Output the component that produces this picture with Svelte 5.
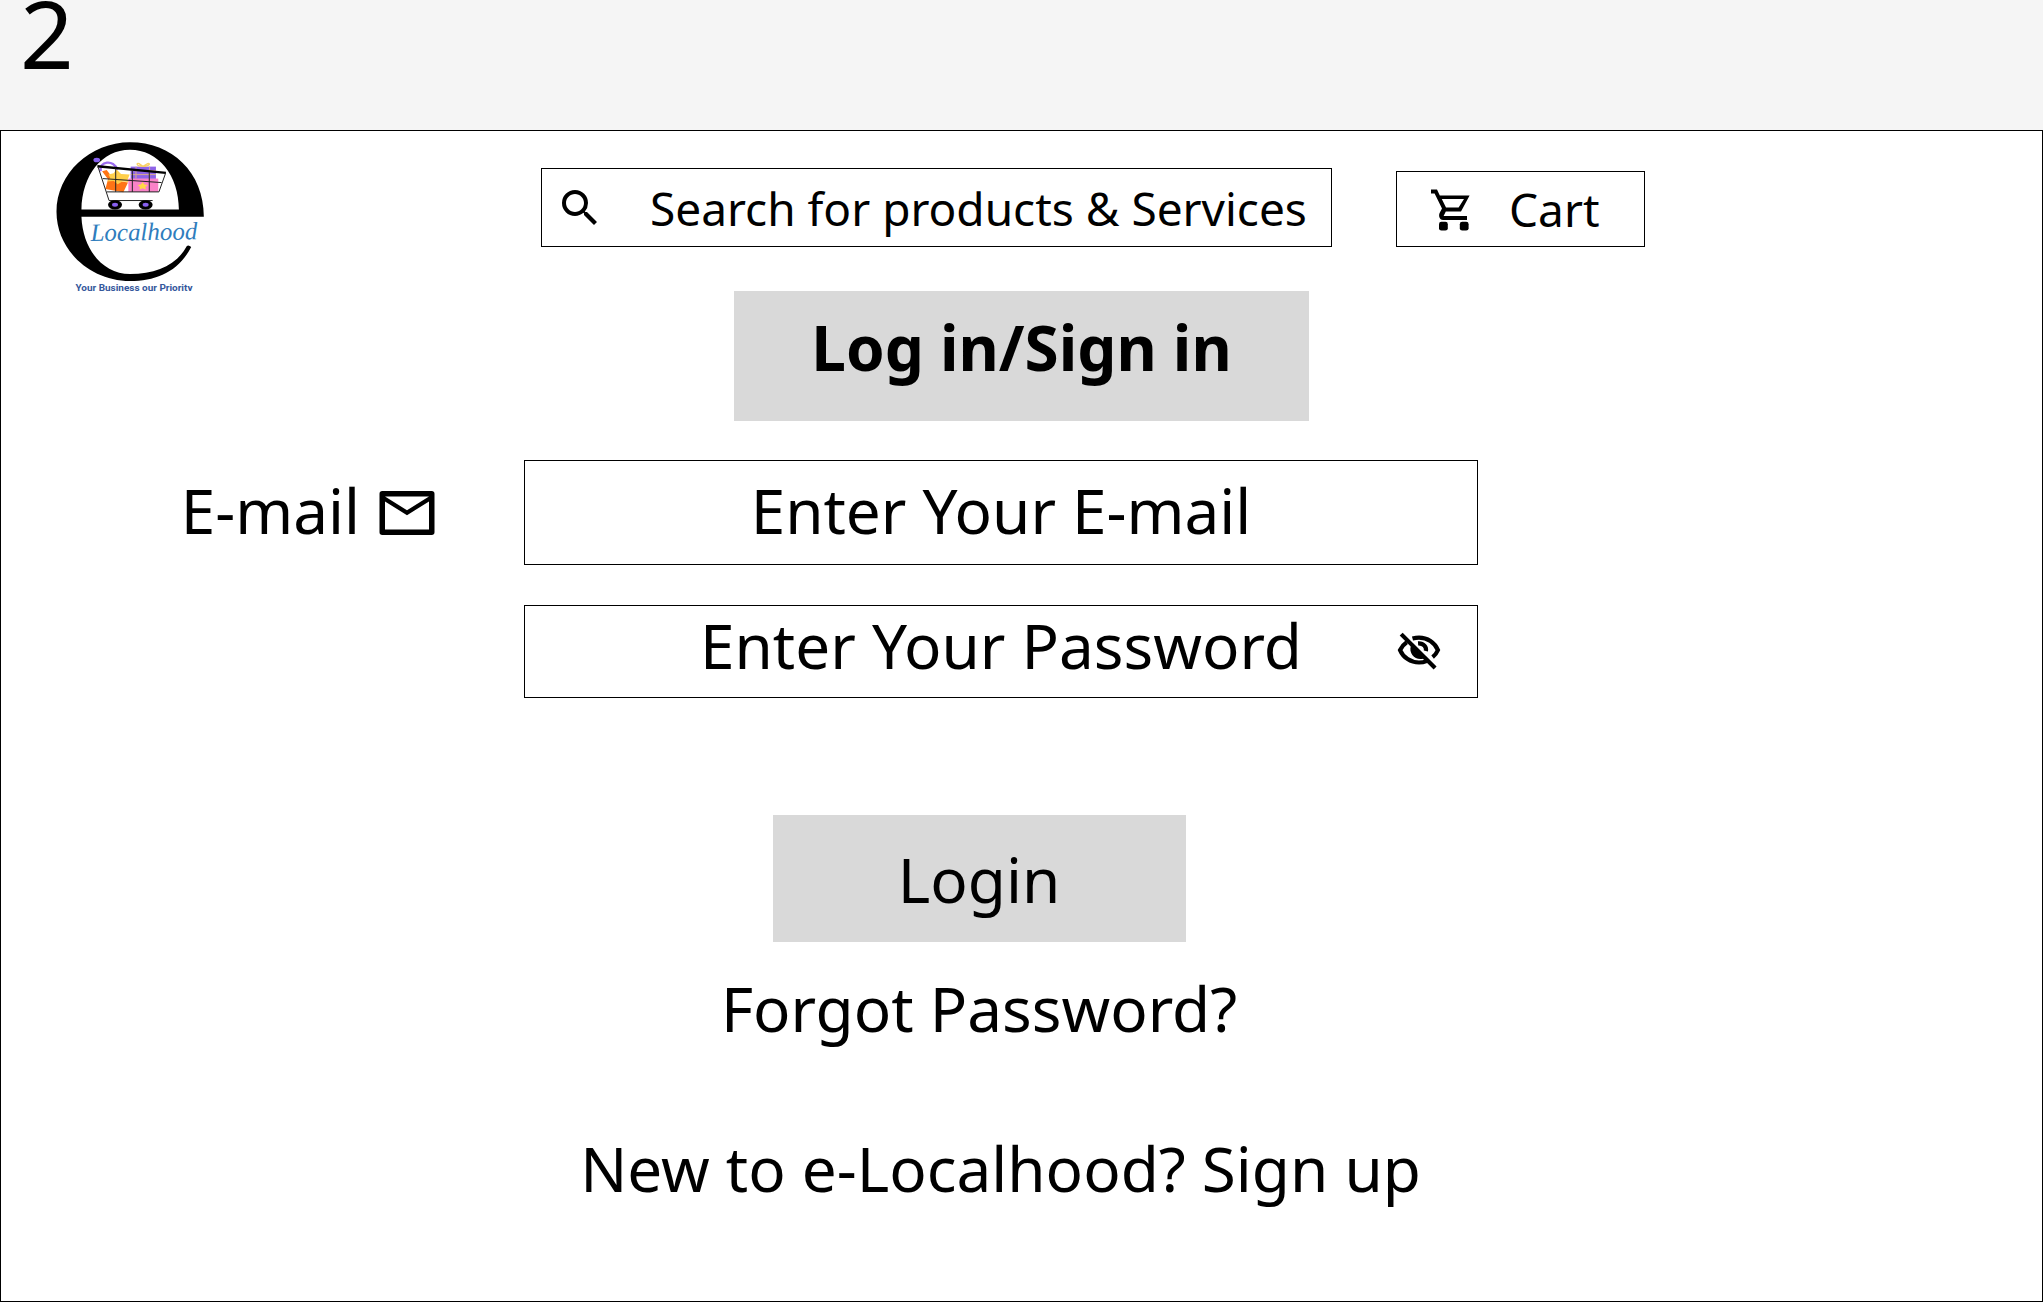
<script>
  let query = $state('');
  let email = $state('');
  let password = $state('');
</script>

<p class="page-number">2</p>

<div class="frame">
  <header class="top">
    <svg class="logo" viewBox="48 50 444 448" role="img" aria-label="e-Localhood">
      <path
        fill-rule="evenodd"
        d="M492 275H124C128 375 190 447 270 447C350 447 410 420 441 363Q446 358 454 366C415 440 350 468 270 468C150 468 49 375 49 260C49 145 150 51 270 51C395 51 492 140 492 275ZM124 253H417C417 150 355 73 270 73C185 73 126 150 124 253Z"
      />
      <g fill="none" stroke="#9b6cf0" stroke-width="7">
        <path d="M182 138C175 108 222 100 232 134" />
      </g>
      <path fill="#ff7415" d="M186 138l14-4 18 24-14 4zM204 162l60 10-14 29-54-10z" />
      <path fill="#ffcf4a" d="M205 148l16-4 8-12 14 14 26 2-6 14 4 8-20-1-14 8-12-10-20 2 10-10z" />
      <path fill="#8e63e8" d="M272 124h76v37h-76z" />
      <path fill="none" stroke="#d7a98f" stroke-width="3" d="M288 124v36M329 124v36M272 136h76M272 148h76" />
      <path fill="#fa82c8" d="M265 160h90v40h-90z" />
      <path fill="#ffda45" d="M308 170l5 8 10 1-7 6 2 8-10-4-10 4 2-8-7-6 10-1z" />
      <path fill="none" stroke="#f7cf65" stroke-width="4" d="M309 123c-22 0-20-12-12-8l12 8 14-8c10-2 6 8-14 8" />
      <path fill="none" stroke="#000" stroke-width="7" d="M172 123L378 143" />
      <path fill="none" stroke="#222" stroke-width="3" d="M174 125L207 226H338M377 144L357 200H200M188 160L365 172M227 130V200M277 134V200M328 140V200" />
      <ellipse cx="170" cy="104" rx="10" ry="7" fill="#8860f0" />
      <ellipse cx="225" cy="239" rx="21" ry="14" />
      <ellipse cx="317" cy="239" rx="21" ry="14" />
      <ellipse cx="225" cy="239" rx="9" ry="6" fill="#8860f0" />
      <ellipse cx="317" cy="239" rx="9" ry="6" fill="#8860f0" />
      <text class="brand" x="152" y="348" transform="rotate(-1 152 348)">Localhood</text>
      <text class="tagline" x="106" y="497">Your Business our Priority</text>
    </svg>

    <label class="search">
      <svg class="icon" viewBox="0 0 24 24" aria-hidden="true">
        <path d="M15.5 14h-.79l-.28-.27A6.471 6.471 0 0 0 16 9.500 6.500 6.500 0 1 0 9.500 16c1.610 0 3.090-.59 4.230-1.570l.27.28v.79l5 4.990L20.490 19l-4.990-5zm-6 0C7.010 14 5 11.990 5 9.500S7.010 5 9.500 5 14 7.010 14 9.500 11.990 14 9.500 14z" />
      </svg>
      <input type="search" aria-label="Search" placeholder="Search for products &amp; Services" bind:value={query} />
    </label>

    <button class="cart" type="button">
      <svg class="icon" viewBox="0 0 24 24" aria-hidden="true">
        <path d="M16 13.200 20.300 5.200H5.400L4 2.200H1v2h1.800l3.700 7.600-1.200 2.200C4.600 15.800 5.500 17.500 7 17.500h12v-2H7.300l1.100-2.300H16zM6.400 7h11.100l-2.700 4.300H8.500L6.400 7z" />
        <rect x="5" y="18.400" width="4.400" height="4.400" rx="1.200" />
        <rect x="15.400" y="18.400" width="4.400" height="4.400" rx="1.200" />
      </svg>
      <span>Cart</span>
    </button>
  </header>

  <main>
    <h1>Log in/Sign in</h1>

    <form onsubmit={(event) => event.preventDefault()}>
      <div class="row">
        <label class="caption" for="email">
          <span>E-mail</span>
          <svg class="mail" viewBox="0 0 24 24" aria-hidden="true">
            <path d="M22 5c0-.6-.4-1-1-1H3c-.6 0-1 .4-1 1v14c0 .6.400 1 1 1h18c.6 0 1-.4 1-1V5zm-2 1-8 5-8-5h16zm0 12H4V7.800l8 5 8-5V18z" />
          </svg>
        </label>
        <input class="field" id="email" type="email" placeholder="Enter Your E-mail" bind:value={email} />
      </div>

      <div class="row">
        <div class="password">
          <input class="field" type="password" aria-label="Password" placeholder="Enter Your Password" bind:value={password} />
          <button class="eye" type="button" aria-label="Show password">
            <svg viewBox="0 0 24 24" aria-hidden="true">
              <g fill="none" stroke="#000" stroke-width="2.200">
                <path d="M5.600 7.400C4 8.500 2.800 9.900 2.100 11.500 3.800 15.400 7.600 18 12 18c1.400 0 2.700-.2 3.900-.7" />
                <path d="M8.600 5.500C9.700 5.200 10.800 5 12 5c4.400 0 8.200 2.600 9.900 6.500-.6 1.400-1.500 2.700-2.800 3.700" />
                <path d="M11.500 8c3-.2 4.500 2 4.100 4" />
                <path d="M2.700 3.200 20.400 20.900" />
              </g>
              <path d="M7.800 9.300 14.400 15.900C10.500 17.300 6.300 13.600 7.800 9.300z" />
            </svg>
          </button>
        </div>
      </div>

      <div class="actions">
        <button class="login" type="submit">Login</button>
        <a href="#forgot">Forgot Password?</a>
      </div>
    </form>

    <p class="join">New to e-Localhood? <a href="#signup">Sign up</a></p>
  </main>
</div>

<style>
  :global(body) {
    background: #f5f5f5;
    color: #000;
    font-family: 'Noto Sans', 'Open Sans', sans-serif;
    font-size: 62px;
    line-height: 84px;
  }

  :global(#app) {
    display: flex;
    flex-direction: column;
    min-height: 100vh;
  }

  .page-number {
    margin: 0;
    padding: 0 20px;
    height: 130px;
    box-sizing: border-box;
    font-size: 94px;
    line-height: 66px;
  }

  .frame {
    flex: 1;
    box-sizing: border-box;
    border: 1px solid #000;
    background: #fff;
  }

  input,
  button {
    box-sizing: border-box;
    margin: 0;
    padding: 0;
    border: 0;
    border-radius: 0;
    background: none;
    color: inherit;
    font: inherit;
  }

  input::placeholder {
    color: #000;
    opacity: 1;
  }

  a {
    color: inherit;
    text-decoration: none;
  }

  svg {
    display: block;
    flex: none;
  }

  .icon {
    width: 48px;
    height: 48px;
  }

  .top {
    display: grid;
    grid-template-columns: 540fr 791fr 64fr 249fr 397fr;
    align-items: end;
    padding-top: 11px;
    font-size: 46px;
    line-height: 62px;
  }

  .logo {
    width: 148px;
    height: 149px;
    margin-left: 55px;
  }

  .brand {
    fill: #2f7dbd;
    font: italic 75px 'Liberation Serif', serif;
  }

  .tagline {
    fill: #35589c;
    font: bold 30px Roboto, sans-serif;
  }

  .search,
  .cart {
    box-sizing: border-box;
    display: flex;
    align-items: center;
    margin-bottom: 44px;
    border: 1px solid #000;
  }

  .search {
    height: 79px;
    gap: 46px;
    padding-left: 14px;
  }

  .search input {
    flex: 1;
    min-width: 0;
    height: 64px;
    appearance: none;
    outline-offset: 4px;
  }

  .cart {
    grid-column: 4;
    height: 76px;
    gap: 32px;
    padding-left: 32px;
  }

  h1 {
    width: 575px;
    max-width: 100%;
    height: 130px;
    box-sizing: border-box;
    margin: 0 auto 39px;
    padding-top: 11px;
    background: #d9d9d9;
    font-size: 62px;
    line-height: 90px;
    text-align: center;
  }

  .row {
    display: grid;
    grid-template-columns: 523fr 954fr 564fr;
    align-items: center;
    margin-bottom: 40px;
  }

  .caption {
    display: flex;
    align-items: center;
    justify-content: flex-end;
    gap: 14px;
    padding-right: 84px;
  }

  .caption span {
    padding-bottom: 6px;
  }

  .mail {
    width: 66px;
    height: 66px;
  }

  .field {
    width: 100%;
    height: 105px;
    padding-bottom: 6px;
    border: 1px solid #000;
    text-align: center;
  }

  .password {
    position: relative;
    grid-column: 2;
  }

  .password .field {
    display: block;
    height: 93px;
    padding-bottom: 14px;
  }

  .eye {
    position: absolute;
    top: 23px;
    right: 36px;
  }

  .eye svg {
    width: 46px;
    height: 46px;
  }

  .actions {
    display: flex;
    flex-direction: column;
    align-items: center;
    gap: 24px;
    margin: 117px 85px 76px 0;
  }

  .login {
    width: 413px;
    max-width: 100%;
    height: 127px;
    background: #d9d9d9;
  }

  .join {
    margin: 0 42px 0 0;
    text-align: center;
  }
</style>
